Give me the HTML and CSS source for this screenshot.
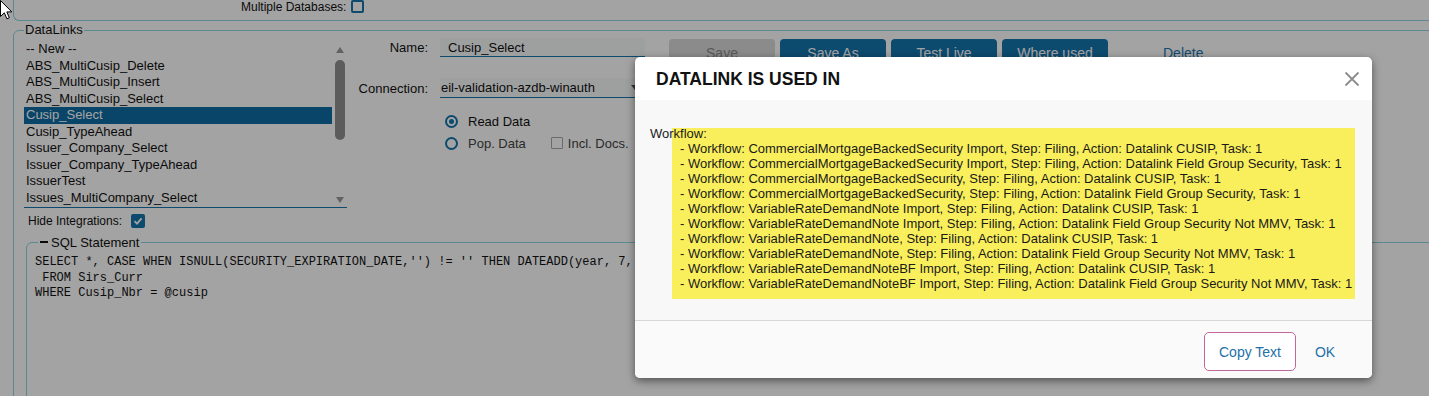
FILE: index.html
```html
<!DOCTYPE html>
<html lang="en">
<head>
    <meta charset="UTF-8">
    <meta name="viewport" content="width=device-width, initial-scale=1.0">
    <title>DataLinks</title>
    <link rel="stylesheet" href="styles.css">
</head>
<body>
<div class="page">
    <!-- Barre du haut -->
    <div class="top-section">
        <span class="small-label">Multiple Databases:</span>
        <span class="check-box"></span>
    </div>

    <fieldset class="datalinks">
        <legend>DataLinks</legend>
        <div class="dl-body">
            <!-- Liste des datalinks -->
            <div class="left-col">
                <div class="list">
                    <div class="items">
                        <div class="item">-- New --</div>
                        <div class="item">ABS_MultiCusip_Delete</div>
                        <div class="item">ABS_MultiCusip_Insert</div>
                        <div class="item">ABS_MultiCusip_Select</div>
                        <div class="item selected">Cusip_Select</div>
                        <div class="item">Cusip_TypeAhead</div>
                        <div class="item">Issuer_Company_Select</div>
                        <div class="item">Issuer_Company_TypeAhead</div>
                        <div class="item">IssuerTest</div>
                        <div class="item">Issues_MultiCompany_Select</div>
                    </div>
                    <div class="scrollbar">
                        <span class="arrow-up"></span>
                        <span class="thumb"></span>
                        <span class="arrow-down"></span>
                    </div>
                </div>
                <div class="hide-row">
                    <span class="small-label">Hide Integrations:</span>
                    <span class="check-box checked">
                        <svg width="10" height="10" viewBox="0 0 10 10"><path d="M1.5 5.2 L4 7.6 L8.6 2.4" fill="none" stroke="#fff" stroke-width="1.8"/></svg>
                    </span>
                </div>
            </div>

            <!-- Formulaire -->
            <div class="right-col">
                <div class="form">
                    <div class="form-row name-row">
                        <label>Name:</label>
                        <input type="text" class="text-field" value="Cusip_Select">
                    </div>
                    <div class="form-row conn-row">
                        <label>Connection:</label>
                        <div class="select-field">
                            <span>eil-validation-azdb-winauth</span>
                            <span class="caret"></span>
                        </div>
                    </div>
                    <div class="options">
                        <div class="option-row">
                            <span class="radio on"></span>
                            <span>Read Data</span>
                        </div>
                        <div class="option-row muted">
                            <span class="radio"></span>
                            <span>Pop. Data</span>
                            <span class="small-box"></span>
                            <span>Incl. Docs.</span>
                        </div>
                    </div>
                </div>
                <div class="actions">
                    <button class="btn disabled">Save</button>
                    <button class="btn">Save As</button>
                    <button class="btn">Test Live</button>
                    <button class="btn">Where used</button>
                    <a class="delete-link">Delete</a>
                </div>
            </div>
        </div>

        <!-- Requete SQL -->
        <fieldset class="sql">
            <legend><span class="dash"></span>SQL Statement</legend>
<pre class="sql-text">SELECT *, CASE WHEN ISNULL(SECURITY_EXPIRATION_DATE,'') != '' THEN DATEADD(year, 7, SECURITY_EXPIRATION_DATE) ELSE NULL END AS PURGE_DATE
 FROM Sirs_Curr
WHERE Cusip_Nbr = @cusip</pre>
        </fieldset>
    </fieldset>

    <div class="backdrop"></div>

    <!-- Fenetre modale -->
    <div class="modal">
        <div class="modal-header">
            <h2>DATALINK IS USED IN</h2>
            <span class="close">
                <svg width="16" height="16" viewBox="0 0 16 16"><path d="M1.5 1.5 L14.5 14.5 M14.5 1.5 L1.5 14.5" stroke="#8c8c8c" stroke-width="1.8"/></svg>
            </span>
        </div>
        <div class="modal-body">
            <div class="used-label">Workflow:</div>
            <div class="used-list">
                <div>- Workflow: CommercialMortgageBackedSecurity Import, Step: Filing, Action: Datalink CUSIP, Task: 1</div>
                <div>- Workflow: CommercialMortgageBackedSecurity Import, Step: Filing, Action: Datalink Field Group Security, Task: 1</div>
                <div>- Workflow: CommercialMortgageBackedSecurity, Step: Filing, Action: Datalink CUSIP, Task: 1</div>
                <div>- Workflow: CommercialMortgageBackedSecurity, Step: Filing, Action: Datalink Field Group Security, Task: 1</div>
                <div>- Workflow: VariableRateDemandNote Import, Step: Filing, Action: Datalink CUSIP, Task: 1</div>
                <div>- Workflow: VariableRateDemandNote Import, Step: Filing, Action: Datalink Field Group Security Not MMV, Task: 1</div>
                <div>- Workflow: VariableRateDemandNote, Step: Filing, Action: Datalink CUSIP, Task: 1</div>
                <div>- Workflow: VariableRateDemandNote, Step: Filing, Action: Datalink Field Group Security Not MMV, Task: 1</div>
                <div>- Workflow: VariableRateDemandNoteBF Import, Step: Filing, Action: Datalink CUSIP, Task: 1</div>
                <div>- Workflow: VariableRateDemandNoteBF Import, Step: Filing, Action: Datalink Field Group Security Not MMV, Task: 1</div>
            </div>
        </div>
        <div class="modal-footer">
            <button class="copy-button">Copy Text</button>
            <button class="ok-button">OK</button>
        </div>
    </div>

    <svg class="cursor" width="13" height="20" viewBox="0 0 13 20"><path d="M0.5 0.5 L0.5 16.5 L4.3 12.8 L6.9 18.8 L9.3 17.8 L6.8 11.9 L11.8 11.9 Z" fill="#fff" stroke="#000" stroke-width="1"/></svg>
</div>
</body>
</html>
```

FILE: styles.css
```css
* {
    box-sizing: border-box;
}

body {
    margin: 0;
    font-family: "Liberation Sans", Arial, sans-serif;
    font-size: 13px;
    color: #111;
    background-color: #fff;
    overflow: hidden;
}

.page {
    position: relative;
    width: 1429px;
    height: 396px;
    overflow: hidden;
}

.small-label {
    font-size: 12px;
}

.top-section {
    display: flex;
    align-items: flex-start;
    gap: 5px;
    height: 21px;
    margin-left: 13px;
    padding-left: 227px;
    line-height: 14px;
    border-left: 1px solid #8ed6e4;
    border-bottom: 1px solid #8ed6e4;
    border-bottom-left-radius: 6px;
}

.check-box {
    display: inline-flex;
    align-items: center;
    justify-content: center;
    width: 13px;
    height: 13px;
    border: 2px solid #1374ad;
    border-radius: 2px;
}

.check-box.checked {
    width: 14px;
    height: 14px;
    background-color: #1374ad;
}

.datalinks {
    width: 1440px;
    height: 400px;
    margin: 1px 0 0 13px;
    padding: 0 0 0 10px;
    border: 1px solid #8ed6e4;
    border-radius: 6px;
}

.datalinks > legend {
    padding: 0 1px;
    line-height: 16px;
}

.dl-body {
    display: flex;
}

.left-col {
    width: 323px;
    margin-top: 3px;
}

.list {
    display: flex;
    gap: 1px;
    height: 167px;
    border-bottom: 1px solid #1374ad;
}

.items {
    width: 308px;
}

.item {
    height: 16.5px;
    line-height: 16.5px;
    padding-left: 2px;
    white-space: nowrap;
}

.item.selected {
    background-color: #0f6ca3;
    color: #fff;
}

.scrollbar {
    display: flex;
    flex-direction: column;
    align-items: center;
    width: 14px;
    padding: 6px 0 4px;
}

.arrow-up,
.arrow-down {
    width: 0;
    height: 0;
    border-left: 4.5px solid transparent;
    border-right: 4.5px solid transparent;
}

.arrow-up {
    border-bottom: 6px solid #9a9a9a;
}

.arrow-down {
    margin-top: auto;
    border-top: 6px solid #9a9a9a;
}

.thumb {
    width: 10px;
    height: 80px;
    margin-top: 7px;
    border-radius: 5px;
    background-color: #909090;
}

.hide-row {
    display: flex;
    align-items: center;
    gap: 9px;
    height: 14px;
    margin-top: 6px;
    padding-left: 4px;
}

.right-col {
    display: flex;
    padding-left: 8px;
}

.form {
    width: 290px;
}

.form-row {
    display: flex;
    gap: 12px;
}

.form-row label {
    width: 73px;
    text-align: right;
}

.name-row {
    align-items: center;
    height: 19px;
}

.conn-row {
    align-items: center;
    height: 20px;
    margin-top: 21px;
}

.text-field {
    width: 205px;
    height: 19px;
    padding: 0 8px;
    border: none;
    border-bottom: 1px solid #1374ad;
    background-color: #f8fafb;
    font-family: inherit;
    font-size: 13px;
    color: #111;
    outline: none;
}

.select-field {
    display: flex;
    align-items: center;
    justify-content: space-between;
    width: 205px;
    height: 20px;
    padding: 0 6px 0 1px;
    border-bottom: 1px solid #1374ad;
    background-color: #f8fafb;
}

.caret {
    width: 0;
    height: 0;
    border-left: 4px solid transparent;
    border-right: 4px solid transparent;
    border-top: 5px solid #555;
}

.options {
    margin-top: 15px;
    padding-left: 90px;
}

.option-row {
    display: flex;
    align-items: center;
    height: 16px;
}

.option-row + .option-row {
    margin-top: 6px;
}

.option-row.muted {
    color: #444;
}

.radio {
    display: inline-flex;
    align-items: center;
    justify-content: center;
    width: 13px;
    height: 13px;
    margin-right: 10px;
    border: 2px solid #1374ad;
    border-radius: 50%;
}

.radio.on::after {
    content: "";
    width: 5px;
    height: 5px;
    border-radius: 50%;
    background-color: #1374ad;
}

.small-box {
    width: 12px;
    height: 12px;
    margin: 0 5px 0 25px;
    border: 1px solid #a8a8a8;
    border-radius: 1px;
}

.actions {
    display: flex;
    gap: 5px;
    margin-left: 24px;
    padding-top: 1px;
}

.btn {
    width: 106px;
    height: 28px;
    border: none;
    border-radius: 4px;
    background-color: #1374ad;
    color: #fff;
    font-family: inherit;
    font-size: 14px;
}

.btn.disabled {
    background-color: #d9d9d9;
    color: #8a8a8a;
}

.delete-link {
    margin-left: 50px;
    line-height: 28px;
    font-size: 14px;
    color: #1f78b0;
}

.sql {
    width: 1440px;
    height: 200px;
    margin: 7px 0 0 2px;
    padding: 0 0 0 8px;
    border: 1px solid #8ed6e4;
    border-radius: 6px;
}

.sql > legend {
    margin-left: 3px;
    padding: 0 2px;
    line-height: 15px;
}

.dash {
    display: inline-block;
    width: 8px;
    height: 2px;
    margin: 0 3px 4px 0;
    background-color: #111;
    vertical-align: middle;
}

.sql-text {
    margin: 5px 0 0;
    font-family: "Liberation Mono", "Courier New", monospace;
    font-size: 12px;
    line-height: 15.5px;
    color: #111;
}

.backdrop {
    position: absolute;
    inset: 0;
    background-color: rgba(0, 0, 0, 0.36);
}

.modal {
    position: absolute;
    left: 635px;
    top: 57px;
    display: flex;
    flex-direction: column;
    width: 737px;
    height: 321px;
    border-radius: 5px;
    background-color: #fff;
    box-shadow: 0 3px 9px rgba(0, 0, 0, 0.5);
    overflow: hidden;
}

.modal-header {
    display: flex;
    align-items: center;
    justify-content: space-between;
    height: 43px;
    padding: 0 12px 0 21px;
}

.modal-header h2 {
    margin: 2px 0 0;
    font-size: 17.5px;
    font-weight: bold;
    color: #111;
}

.close {
    display: flex;
}

.modal-body {
    height: 220px;
    padding: 25.5px 17px 0 15px;
    background-color: #f8f8f8;
    line-height: 15px;
    color: #1a1a1a;
}

.used-list {
    margin: -13px 0 0 22px;
    padding: 13px 8px 8.5px;
    background-color: #f9ef5c;
    white-space: nowrap;
}

.modal-footer {
    display: flex;
    justify-content: flex-end;
    gap: 4px;
    flex: 1;
    padding: 11px 22px 0 0;
    border-top: 1px solid #d6d6d6;
    background-color: #fafafa;
}

.copy-button {
    width: 92px;
    height: 39px;
    border: 1px solid #c0679d;
    border-radius: 5px;
    background-color: #fff;
    font-family: inherit;
    font-size: 14px;
    color: #2470a8;
}

.ok-button {
    width: 50px;
    height: 39px;
    border: none;
    background: none;
    font-family: inherit;
    font-size: 14px;
    color: #2470a8;
}

.cursor {
    position: absolute;
    left: 0;
    top: 0;
}
```
